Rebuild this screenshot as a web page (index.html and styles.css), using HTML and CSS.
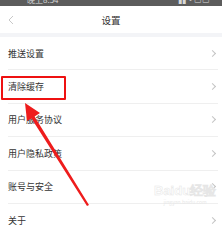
FILE: index.html
```html
<!DOCTYPE html>
<html lang="zh">
<head>
<meta charset="utf-8">
<link rel="stylesheet" href="styles.css">
</head>
<body>
<div class="page">
  <div class="statusbar">
    <span class="st-left">晚上8:54</span>
    <span class="st-right">▮▮ ◔ ▭▭</span>
  </div>
  <div class="navbar">
    <span class="back"><svg width="6" height="10" viewBox="0 0 6 10"><path d="M5 1 L1 5 L5 9" fill="none" stroke="#c8c8c8" stroke-width="1"/></svg></span>
    <span class="title">设置</span>
  </div>
  <div class="band"></div>
  <ul class="list">
    <li class="row"><span>推送设置</span><i class="chev"></i></li>
    <li class="row"><span>清除缓存</span><i class="chev"></i></li>
    <li class="row"><span>用户服务协议</span><i class="chev"></i></li>
    <li class="row"><span>用户隐私政策</span><i class="chev"></i></li>
    <li class="row"><span>账号与安全</span><i class="chev"></i></li>
    <li class="row"><span>关于</span><i class="chev"></i></li>
  </ul>
  <div class="watermark"><div class="wm-big">Bai<span class="paw">du</span>经验</div><div class="wm-small">jingyan.baidu.com</div></div>
  <div class="highlight"></div>
  <svg class="arrow" width="222" height="227" viewBox="0 0 222 227">
    <polygon points="25,103 40,113 34.5,116.5 89,205 87,206 31.5,118.5 27,121" fill="#ee1c1c"/>
  </svg>
</div>
</body>
</html>
```
FILE: styles.css
```css
* { box-sizing: border-box; }
html, body { margin: 0; padding: 0; background: #fff; }
body { font-family: "Noto Sans CJK SC", "Noto Sans", sans-serif; color: #333; }
.page { position: relative; width: 222px; height: 227px; overflow: hidden; }
.statusbar {
  height: 6px; background: #5c5c5c; overflow: hidden;
  display: flex; justify-content: space-between; padding: 0 12px 0 27px;
  font-size: 8px; line-height: 8px; color: #d8d8d8;
}
.statusbar span { margin-top: -4px; }
.navbar {
  height: 27px; display: flex; align-items: center; justify-content: center;
  position: relative;
}
.back { position: absolute; left: 8px; top: 9px; line-height: 0; }
.title { font-size: 9.5px; color: #333; }
.band { height: 4px; background: #f3f4f7; }
.list { list-style: none; margin: 0; padding: 0; }
.row {
  height: 33.4px; margin: 0 4px 0 8px; border-bottom: 1px solid #efefef;
  display: flex; align-items: center; justify-content: space-between;
  font-size: 9px; color: #333;
}
.chev {
  width: 5px; height: 5px; border-top: 1px solid #c4c4c4; border-right: 1px solid #c4c4c4;
  transform: rotate(45deg); margin-right: 3px;
}
.watermark {
  position: absolute; left: 154px; top: 184px; text-align: center;
}
.wm-big { font-family: "Liberation Sans", sans-serif; font-size: 13px; font-weight: bold; line-height: 14px; -webkit-text-stroke: 0.5px #e6e6e6; color: #fff; }
.wm-small { font-size: 5px; line-height: 7px; color: #e8e8e8; }
.highlight {
  position: absolute; left: 1px; top: 76px; width: 65px; height: 24px;
  border: 2px solid #ee1111; border-radius: 1px;
}
.arrow { position: absolute; left: 0; top: 0; }
```
